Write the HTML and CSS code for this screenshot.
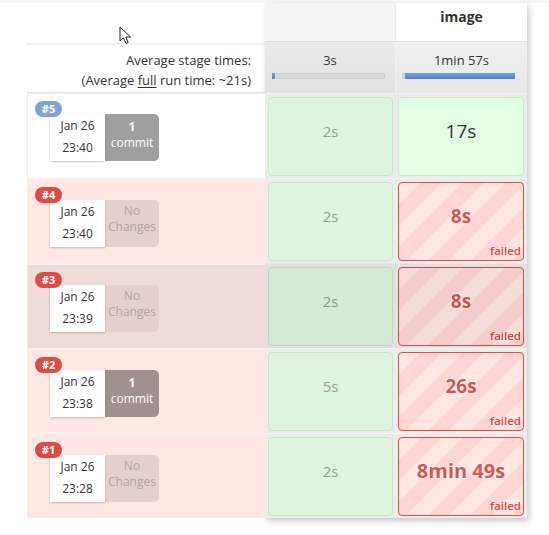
FILE: index.html
```html
<!DOCTYPE html>
<html>
<head>
<meta charset="utf-8">
<link rel="stylesheet" href="styles.css">
</head>
<body>
<div class="topband"></div>
<svg class="cursor" width="14" height="20" viewBox="0 0 14 20"><path d="M1 1 L1 15 L4.5 11.8 L7 17.5 L9.2 16.5 L6.8 11 L11.5 11 Z" fill="#fff" stroke="#222" stroke-width="1" stroke-linejoin="round"/></svg>
<div class="view">
  <div class="runs">
    <div class="runs-head">
      <div>Average stage times:</div>
      <div>(Average <u>full</u> run time: ~21s)</div>
    </div>
    <div class="run">
      <span class="badge blue">#5</span>
      <div class="date"><div>Jan 26</div><div>23:40</div></div>
      <div class="changes commit"><b>1</b><div>commit</div></div>
    </div>
    <div class="run fail">
      <span class="badge red">#4</span>
      <div class="date"><div>Jan 26</div><div>23:40</div></div>
      <div class="changes none"><div>No</div><div>Changes</div></div>
    </div>
    <div class="run fail hover">
      <span class="badge red">#3</span>
      <div class="date"><div>Jan 26</div><div>23:39</div></div>
      <div class="changes none"><div>No</div><div>Changes</div></div>
    </div>
    <div class="run fail">
      <span class="badge red">#2</span>
      <div class="date"><div>Jan 26</div><div>23:38</div></div>
      <div class="changes commit"><b>1</b><div>commit</div></div>
    </div>
    <div class="run fail">
      <span class="badge red">#1</span>
      <div class="date"><div>Jan 26</div><div>23:28</div></div>
      <div class="changes none"><div>No</div><div>Changes</div></div>
    </div>
  </div>
  <div class="stages">
    <div class="stage-head">
      <div class="sname"></div>
      <div class="sname sel">image</div>
    </div>
    <div class="avg-row">
      <div class="avg"><div class="avg-t">3s</div><div class="bar"><div class="fill" style="width:3px"></div></div></div>
      <div class="avg sel"><div class="avg-t">1min 57s</div><div class="bar"><div class="fill" style="width:110px"></div></div></div>
    </div>
    <div class="srow">
      <div class="slot"><div class="cell ok"><span class="dur">2s</span></div></div>
      <div class="slot"><div class="cell ok2"><span class="dur big">17s</span></div></div>
    </div>
    <div class="srow">
      <div class="slot"><div class="cell ok"><span class="dur">2s</span></div></div>
      <div class="slot"><div class="cell failed"><span class="dur">8s</span><span class="flag">failed</span></div></div>
    </div>
    <div class="srow hover">
      <div class="slot"><div class="cell ok"><span class="dur">2s</span></div></div>
      <div class="slot"><div class="cell failed"><span class="dur">8s</span><span class="flag">failed</span></div></div>
    </div>
    <div class="srow">
      <div class="slot"><div class="cell ok"><span class="dur">5s</span></div></div>
      <div class="slot"><div class="cell failed"><span class="dur">26s</span><span class="flag">failed</span></div></div>
    </div>
    <div class="srow">
      <div class="slot"><div class="cell ok"><span class="dur">2s</span></div></div>
      <div class="slot"><div class="cell failed"><span class="dur large">8min 49s</span><span class="flag">failed</span></div></div>
    </div>
  </div>
</div>
</body>
</html>
```

FILE: styles.css
```css
* { box-sizing: border-box; }
html, body { margin: 0; padding: 0; background: #fff; }
body {
  font-family: "Open Sans", "Noto Sans", sans-serif;
  color: #333;
  position: relative;
  width: 549px;
  height: 535px;
  overflow: hidden;
}
.topband { height: 3px; background: #f7f7f7; }
.cursor { position: absolute; left: 119px; top: 26px; }

.view { display: flex; padding-left: 27px; }

.runs { width: 238px; }
.runs-head {
  margin-top: 40px;
  height: 50px;
  padding: 6px 14px 0 0;
  text-align: right;
  font-size: 13px;
  line-height: 20px;
  color: #333;
  border-top: 1px solid #eeeeee;
  box-shadow: inset 0 2px 2px -1px rgba(0,0,0,0.06);
  border-bottom: 1px solid #e2e2e2;
}
.runs-head u { text-underline-offset: 2px; }

.run {
  position: relative;
  height: 85px;
  border-top: 1px solid #f0f0f0;
  border-left: 1px solid #eeeeee;
  padding: 20px 0 0 22px;
  display: flex;
  align-items: flex-start;
  background: #fff;
}
.run:first-of-type { border-top: none; }
.run.fail { background: #ffe7e3; border-top: 2px solid #f4f0ef; }
.run.hover { background: #efdcd8; }

.badge {
  position: absolute;
  left: 7px; top: 7px;
  width: 27px; height: 16px;
  border-radius: 8px;
  color: #fff;
  font-size: 11px;
  font-weight: 700;
  line-height: 16px;
  text-align: center;
  z-index: 2;
}
.badge.blue { background: #7fa5d2; }
.badge.red { background: #de4a46; }

.date {
  width: 55px; height: 47px;
  background: #fff;
  box-shadow: 0 1px 2px rgba(0,0,0,0.22);
  text-align: center;
  font-size: 12px;
  line-height: 22px;
  padding-top: 1px;
  color: #333;
  position: relative;
  z-index: 1;
}
.changes {
  width: 54px; height: 47px;
  border-radius: 0 5px 5px 0;
  text-align: center;
  font-size: 12px;
}
.changes.commit { background: #9f9f9f; color: #fff; padding-top: 5px; line-height: 16px; }
.fail .changes.commit { background: #a0918f; }
.changes.commit b { display: block; }
.changes.none { background: #e5d0cd; color: #b3a3a1; padding-top: 3px; line-height: 16px; }

.stages {
  width: 262px;
  box-shadow: 2px 3px 6px rgba(0,0,0,0.22);
  background: #ececec;
}
.stage-head { display: grid; grid-template-columns: 131px 131px; height: 38px; }
.sname {
  background: #f5f5f5;
  text-align: center;
  font-size: 14px;
  font-weight: 700;
  line-height: 18px;
  padding-top: 5px;
  color: #333;
  border-right: 1px solid #ebebeb;
}
.sname.sel { background: #fff; border-right: none; }

.avg-row {
  display: grid; grid-template-columns: 131px 131px; height: 52px;
  border-top: 1px solid #dedede;
}
.avg {
  background: linear-gradient(#ebebeb, #e1e1e1);
  padding-top: 9px;
  border-right: 1px solid #f2f2f2;
}
.avg.sel { background: linear-gradient(#f1f1f1, #e8e8e8); border-right: none; }
.avg-t { text-align: center; font-size: 13px; line-height: 18px; color: #333; }
.bar {
  margin: 4px 0 0 7px;
  width: 113px; height: 6px;
  background: #d8d8d8;
  border: 1px solid #cccccc;
  position: relative;
}
.avg.sel .bar { margin-left: 6px; }
.fill {
  position: absolute; right: -1px; top: -1px; bottom: -1px;
  background: linear-gradient(#6f9fe0, #4d82cf);
}
.avg:first-child .fill { left: -1px; right: auto; }

.srow {
  display: grid; grid-template-columns: 131px 131px; height: 85px;
  border-top: 1px solid #f3f3f3;
  background: #ebedeb;
}
.srow.hover { filter: brightness(0.955); }
.slot { padding: 3px 3px 2px 3px; }
.slot + .slot { padding: 3px 3px 2px 2px; }
.cell {
  height: 79px;
  border-radius: 4px;
  position: relative;
  text-align: center;
  padding-top: 22px;
}
.cell.ok { background: #dff5df; border: 1px solid #d0dfd0; }
.cell.ok2 { background: #e3ffe3; border: 1px solid #d0e4d0; }
.cell.failed {
  border: 1px solid #e0504a;
  background: repeating-linear-gradient(135deg, #ffe6e2 0 15px, #ffd6d6 15px 30px);
}
.dur { display: block; font-size: 15px; line-height: 22px; color: #9a9a9a; }
.dur.big { font-size: 19px; color: #333; }
.failed .dur {
  font-size: 19px; font-weight: 700; color: #d9534f;
  text-shadow: 0 0 3px #fff, 0 0 2px #fff;
}
.failed .dur.large { font-size: 20px; }
.flag {
  position: absolute; right: 2px; bottom: 2px;
  font-size: 11.5px; font-weight: 600; color: #e0433e;
  line-height: 14px;
  text-shadow: 0 0 2px #fff;
}
```
